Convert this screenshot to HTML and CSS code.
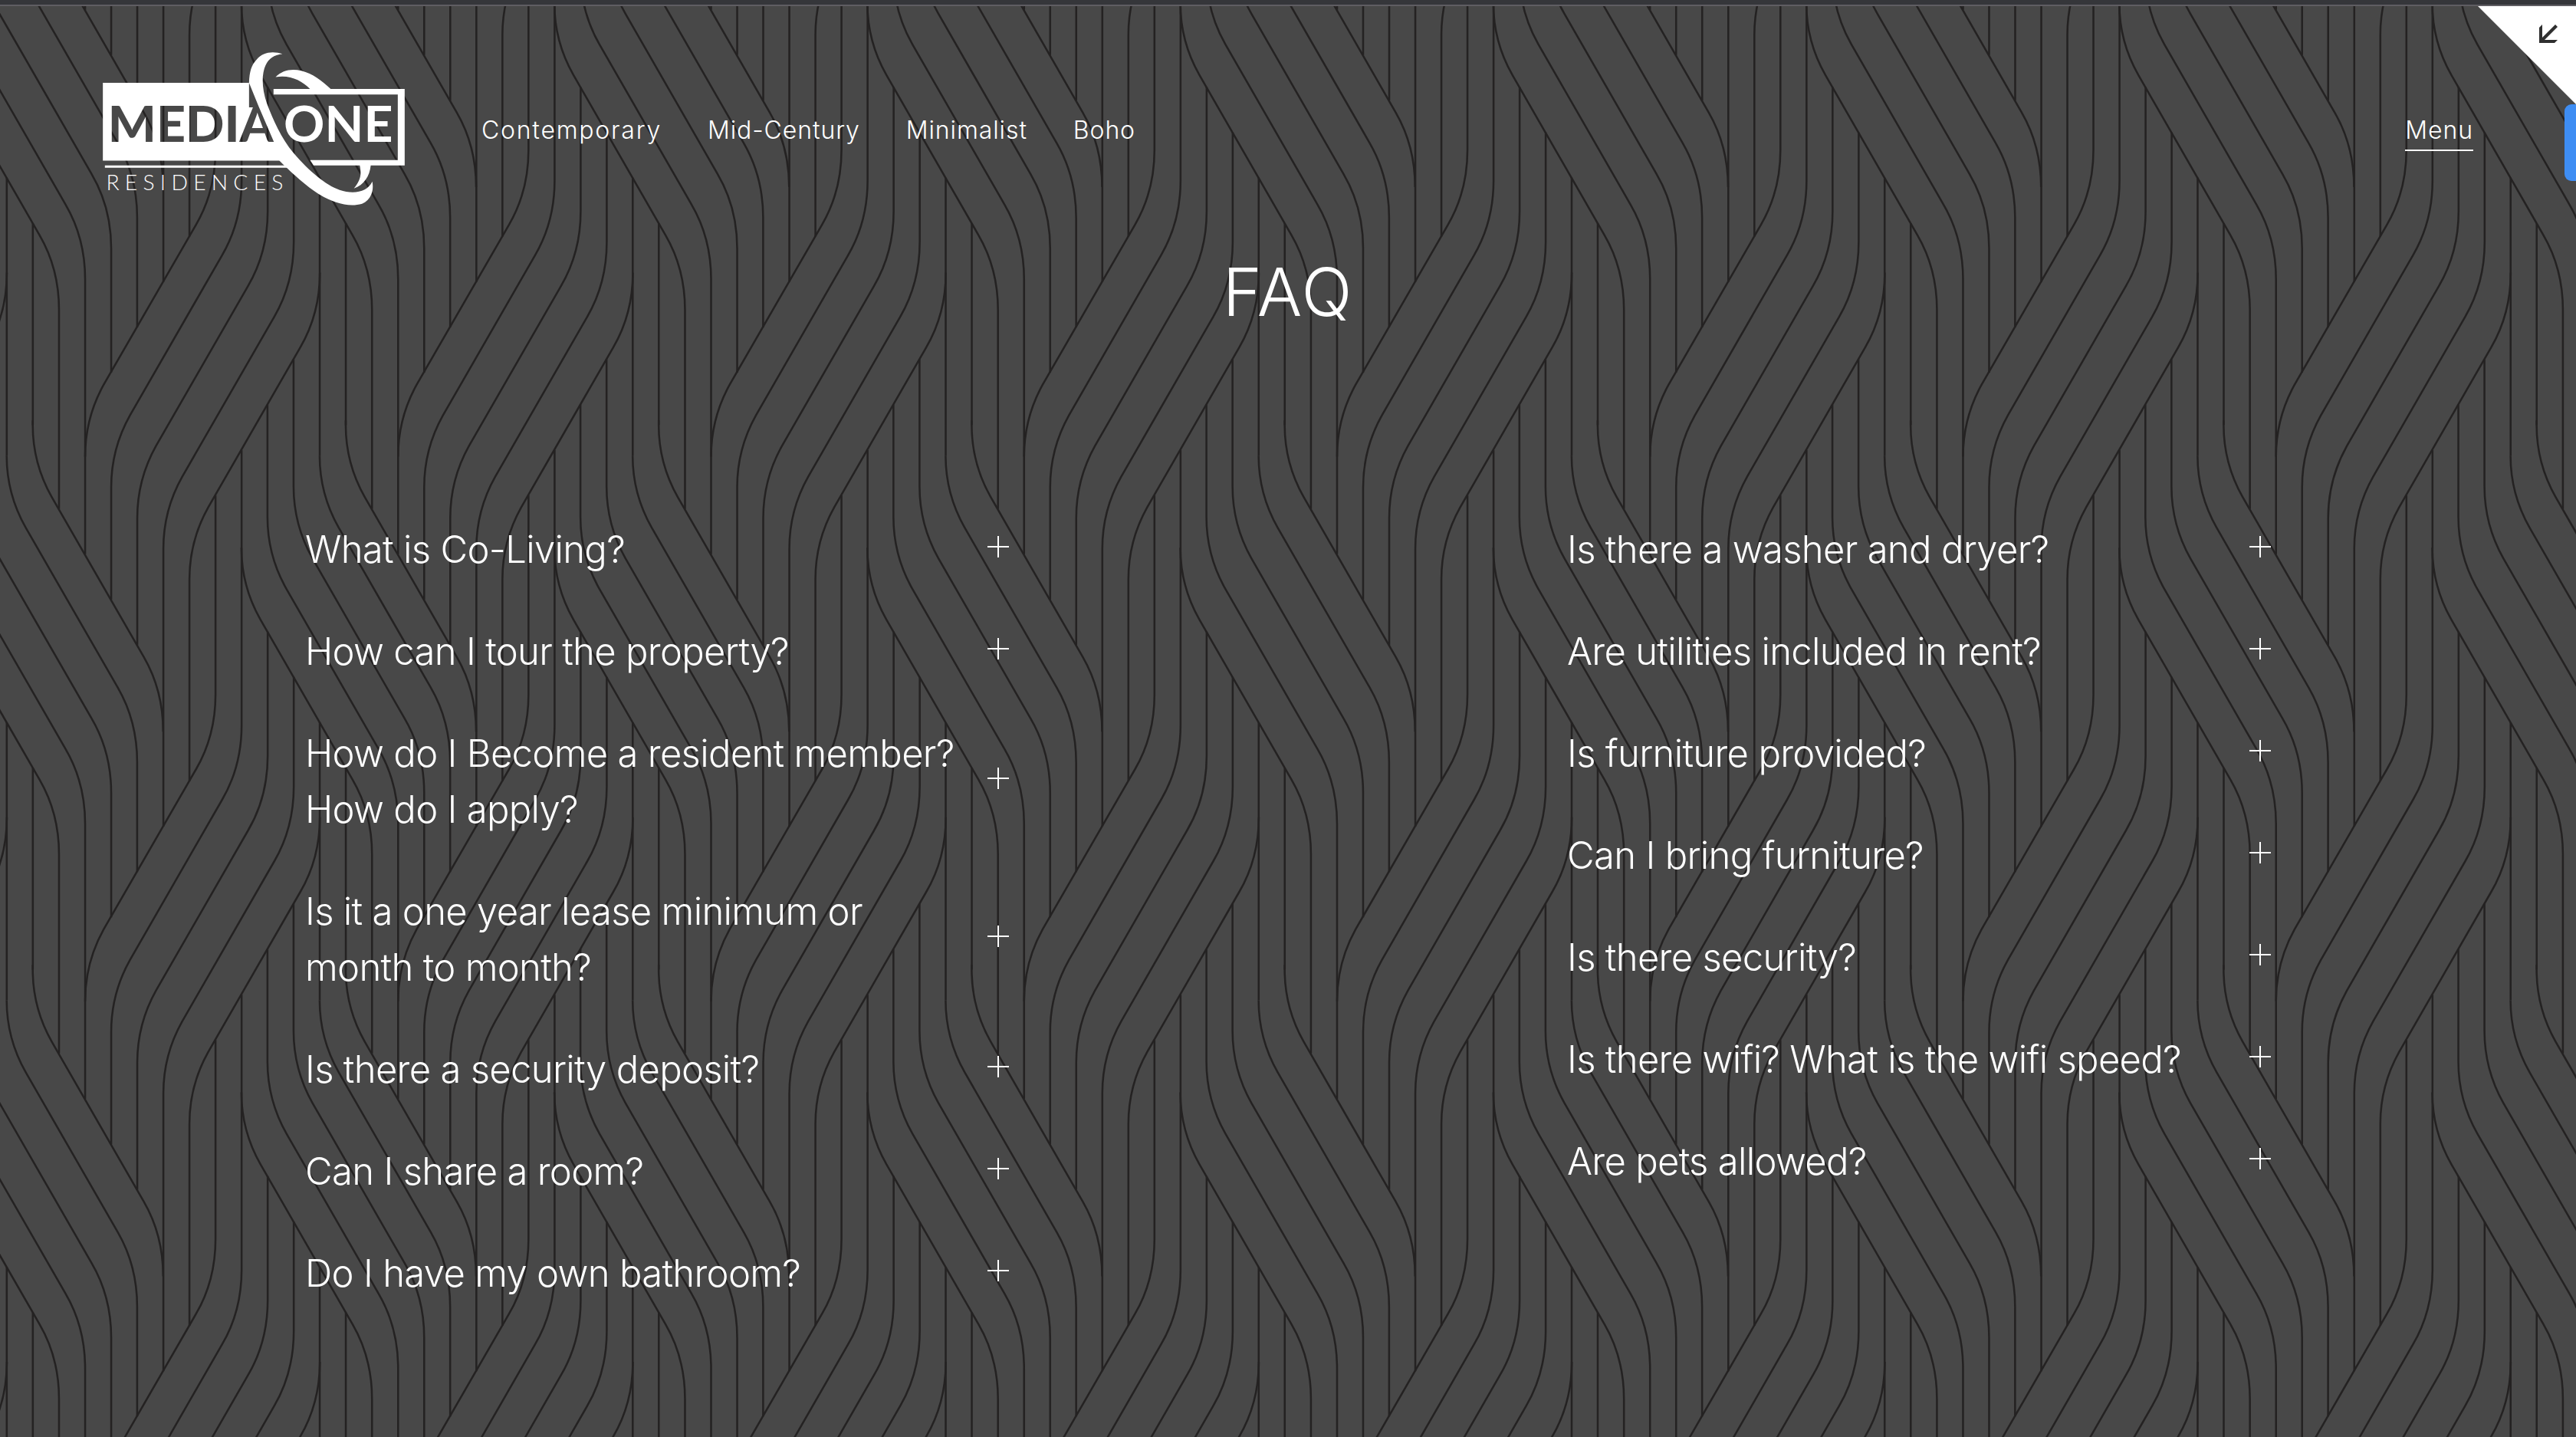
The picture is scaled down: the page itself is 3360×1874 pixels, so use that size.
FILE: index.html
```html
<!DOCTYPE html>
<html lang="en">
<head>
<meta charset="utf-8">
<title>FAQ | Media One Residences</title>
<link rel="stylesheet" href="styles.css">
</head>
<body>
<svg class="weave" width="3360" height="1874" viewBox="0 0 3360 1874" aria-hidden="true">
  <defs>
    <g id="tile">
      <!-- strands leaning right -->
      <path d="M773.3 265V280Q773.3 403 834 510L1128 1021Q1190 1128 1190 1260"/>
      <path d="M690 378Q690 501 751 608L1045 1119Q1107 1226 1107 1358V1708"/>
      <path d="M606.7 70V476Q606.7 599 667 706L961 1217Q1024 1324 1024 1456V1853"/>
      <path d="M523.3 215V574Q523.3 697 584 804L878 1315Q940.7 1422 940.7 1554V2433"/>
      <path d="M440 672Q440 795 501 902L795 1413Q857.3 1520 857.3 1652V2288"/>
      <!-- strands leaning left -->
      <path d="M357.3 505V1141Q357.3 1273 295 1380L0 1891Q-59.3 1998 -59.3 2121"/>
      <path d="M440.7 360V1239Q440.7 1371 378 1478L84 1989Q24 2096 24 2219V2578"/>
      <path d="M524 940V1337Q524 1469 461 1576L167 2087Q107.3 2194 107.3 2317V2723"/>
      <path d="M607.3 1085V1435Q607.3 1567 545 1674L251 2185Q190.7 2292 190.7 2415V3303"/>
      <path d="M690.7 1533Q690.7 1665 628 1772L334 2283Q274 2390 274 2513V3158"/>
      <!-- straight strands -->
      <path d="M690.3 1230V2118M773.6 1375V2020"/>
    </g>
    <g id="column">
      <use href="#tile" y="-3480"/>
      <use href="#tile" y="-1740"/>
      <use href="#tile"/>
      <use href="#tile" y="1740"/>
    </g>
  </defs>
  <g class="weave-lines" transform="translate(-273 440) scale(.40824 .40816)">
    <use href="#column"/>
    <use href="#column" x="1000"/>
    <use href="#column" x="2000"/>
    <use href="#column" x="3000"/>
    <use href="#column" x="4000"/>
    <use href="#column" x="5000"/>
    <use href="#column" x="6000"/>
    <use href="#column" x="7000"/>
    <use href="#column" x="8000"/>
  </g>
</svg>

<div class="page">
  <div class="chrome-edge"></div>
  <header class="header">
    <a class="logo" href="#">
      <svg viewBox="102 84 1183 601" width="394" height="200" role="img" aria-label="Media One Residences">
        <defs>
          <mask id="media" maskUnits="userSpaceOnUse" x="100" y="80" width="1190" height="610">
            <rect x="100" y="80" width="1190" height="610" fill="#fff"/>
            <text class="logo-media" x="122" y="435" textLength="656" lengthAdjust="spacingAndGlyphs">MEDIA</text>
          </mask>
        </defs>
        <g fill="#fff">
          <path mask="url(#media)" d="M102 204H675V300H745C760 340 780 400 816 450V509H102Z"/>
          <path d="M110 528H840V537H110Z"/>
          <path d="M675 204C677 160 684 135 704 114C730 82 770 80 806 91C772 95 752 110 740 135C724 170 724 225 745 285C770 350 800 420 850 480C910 550 975 605 1030 624C1085 643 1140 632 1158 591C1166 630 1150 665 1118 678C1060 695 990 670 930 628C880 592 830 545 794 509L772 435L712 295Z"/>
          <path d="M779 182C805 155 840 148 880 157C925 168 960 197 995 228H1285V528H1152C1148 570 1125 605 1086 618C1108 590 1118 570 1109 528H928L914 507H1258V250H771V228H914C880 195 835 172 779 182Z"/>
          <text class="logo-one" x="811" y="435" textLength="428" lengthAdjust="spacingAndGlyphs">ONE</text>
          <text class="logo-sub" x="115" y="626" textLength="694">RESIDENCES</text>
        </g>
      </svg>
    </a>
    <nav class="nav">
      <a class="contemporary" href="#">Contemporary</a>
      <a href="#">Mid-Century</a>
      <a href="#">Minimalist</a>
      <a href="#">Boho</a>
    </nav>
    <a class="menu" href="#">Menu</a>
  </header>

  <main>
    <h1 class="title">FAQ</h1>
    <div class="faq">
      <ul class="faq-list">
        <li><span>What is Co-Living?</span><i class="plus"></i></li>
        <li><span>How can I tour the property?</span><i class="plus"></i></li>
        <li><span>How do I Become a resident member?<br>How do I apply?</span><i class="plus"></i></li>
        <li><span>Is it a one year lease minimum or<br>month to month?</span><i class="plus"></i></li>
        <li><span>Is there a security deposit?</span><i class="plus"></i></li>
        <li><span>Can I share a room?</span><i class="plus"></i></li>
        <li><span>Do I have my own bathroom?</span><i class="plus"></i></li>
      </ul>
      <ul class="faq-list">
        <li><span>Is there a washer and dryer?</span><i class="plus"></i></li>
        <li><span>Are utilities included in rent?</span><i class="plus"></i></li>
        <li><span>Is furniture provided?</span><i class="plus"></i></li>
        <li><span>Can I bring furniture?</span><i class="plus"></i></li>
        <li><span>Is there security?</span><i class="plus"></i></li>
        <li><span>Is there wifi? What is the wifi speed?</span><i class="plus"></i></li>
        <li><span>Are pets allowed?</span><i class="plus"></i></li>
      </ul>
    </div>
  </main>
</div>

<svg class="corner" width="128" height="128" viewBox="0 0 128 128" aria-hidden="true">
  <path d="M0 0H128V128Z" fill="#fff"/>
  <path d="M80 28L84 24V41L101 24L104 27L87 44H104L100 48H80Z" fill="#2f2f2f"/>
</svg>
<div class="side-tab"></div>
</body>
</html>
```

FILE: styles.css
```css
* { box-sizing: border-box; }

body {
  margin: 0;
  width: 3360px;
  height: 1874px;
  overflow: hidden;
  background: #484848;
  color: #fff;
  font-family: Inter, "Open Sans", sans-serif;
  font-weight: 300;
}

a { color: inherit; text-decoration: none; }

.weave {
  position: absolute;
  inset: 0;
  z-index: -1;
}

.weave-lines {
  fill: none;
  stroke: #242222;
  stroke-width: 6.2;
}

.chrome-edge {
  height: 8px;
  background: #35363a;
  border-bottom: 2px solid #5f5d62;
}

.header {
  display: flex;
  align-items: center;
  height: 322px;
  padding: 0 134px;
  margin-top: -1px;
}

.logo, .logo svg { display: block; }

.logo-media, .logo-one {
  font-family: Lato, sans-serif;
  font-weight: 900;
  font-size: 196px;
}

.logo-one { font-weight: 700; }

.logo-sub {
  font-family: Lato, sans-serif;
  font-weight: 300;
  font-size: 85px;
}

.nav {
  display: flex;
  gap: 60px;
  margin-left: 100px;
}

.nav a, .menu {
  padding-top: 4px;
  font-size: 32px;
  line-height: 48px;
  letter-spacing: 0.9px;
  white-space: nowrap;
}

.nav .contemporary { letter-spacing: 1.75px; }

.menu {
  margin-left: auto;
  padding-top: 6px;
  padding-bottom: 1px;
  border-bottom: 2px solid #fff;
}

.title {
  margin: -3px 0 3px;
  text-align: center;
  font-size: 87px;
  font-weight: 300;
  line-height: 110px;
  letter-spacing: 1.8px;
}

.faq {
  display: grid;
  grid-template-columns: 918px 918px;
  column-gap: 728px;
  padding: 206px 0 0 398px;
}

.faq-list {
  margin: 0;
  padding: 0;
  list-style: none;
}

.faq-list li {
  display: flex;
  justify-content: space-between;
  align-items: center;
  height: 133px;
  font-size: 49px;
  line-height: 73px;
  letter-spacing: -0.7px;
  white-space: nowrap;
}

.faq-list li:has(br) { height: 206px; }

.faq-list span { padding-top: 9px; }

.plus {
  flex: none;
  width: 28px;
  height: 28px;
  margin-top: 2px;
  background:
    linear-gradient(#fff, #fff) center / 28px 2px no-repeat,
    linear-gradient(#fff, #fff) center / 2px 28px no-repeat;
}

.corner {
  position: absolute;
  top: 8px;
  right: 0;
}

.side-tab {
  position: absolute;
  top: 136px;
  right: 0;
  width: 15px;
  height: 100px;
  border-radius: 9px 0 0 9px;
  background: #3e8df3;
}
```
